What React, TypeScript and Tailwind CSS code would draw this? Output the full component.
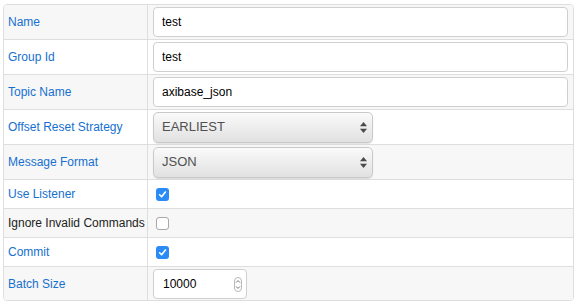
import React from 'react';

type Field =
  | { label: string; kind: 'text'; value: string; dark?: boolean }
  | { label: string; kind: 'select'; value: string; dark?: boolean }
  | { label: string; kind: 'check'; checked: boolean; dark?: boolean }
  | { label: string; kind: 'number'; value: string; dark?: boolean };

const fields: Field[] = [
  { label: 'Name', kind: 'text', value: 'test' },
  { label: 'Group Id', kind: 'text', value: 'test' },
  { label: 'Topic Name', kind: 'text', value: 'axibase_json' },
  { label: 'Offset Reset Strategy', kind: 'select', value: 'EARLIEST' },
  { label: 'Message Format', kind: 'select', value: 'JSON' },
  { label: 'Use Listener', kind: 'check', checked: true },
  { label: 'Ignore Invalid Commands', kind: 'check', checked: false, dark: true },
  { label: 'Commit', kind: 'check', checked: true },
  { label: 'Batch Size', kind: 'number', value: '10000' },
];

function Checkbox({ checked }: { checked: boolean }) {
  if (!checked) {
    return <span className="block w-[13px] h-[13px] rounded-[3px] border border-[#a8a8a8] bg-white" />;
  }
  return (
    <span className="flex items-center justify-center w-[13px] h-[13px] rounded-[3px] bg-[#2a8af6]">
      <svg width="9" height="9" viewBox="0 0 9 9" fill="none">
        <path d="M1.6 4.8 L3.6 6.8 L7.4 2" stroke="white" strokeWidth="1.6" strokeLinecap="round" strokeLinejoin="round" />
      </svg>
    </span>
  );
}

function Select({ value }: { value: string }) {
  return (
    <div className="relative w-[220px] h-[31px]">
      <select
        value={value}
        onChange={() => {}}
        className="appearance-none w-full h-full rounded-[5px] border border-[#c9c9c9] bg-gradient-to-b from-[#fafafa] to-[#e1e1e1] pl-[8px] text-[13px] text-[#505050] shadow-[0_1px_1px_rgba(0,0,0,0.12)] outline-none"
      >
        <option>{value}</option>
      </select>
      {/* arrows */}
      <svg className="absolute right-[6px] top-[10px] pointer-events-none" width="7" height="11" viewBox="0 0 7 11">
        <path d="M3.5 0 L7 4.2 L0 4.2 Z" fill="#4a4a4a" />
        <path d="M3.5 11 L7 6.8 L0 6.8 Z" fill="#4a4a4a" />
      </svg>
    </div>
  );
}

function NumberInput({ value }: { value: string }) {
  return (
    <div className="relative w-[94px] h-[30px]">
      <input
        readOnly
        value={value}
        className="w-full h-full rounded-[4px] border border-[#cfcfcf] bg-white pl-[9px] text-[12px] text-black outline-none"
      />
      <span className="absolute right-[5px] top-[8px] flex flex-col items-center justify-center w-[8px] h-[15px] rounded-[4px] border border-[#b8b8b8] pointer-events-none">
        <svg width="6" height="11" viewBox="0 0 6 11" fill="none">
          <path d="M1 3.6 L3 1.6 L5 3.6" stroke="#666" strokeWidth="0.9" />
          <path d="M1 7.4 L3 9.4 L5 7.4" stroke="#666" strokeWidth="0.9" />
        </svg>
      </span>
    </div>
  );
}

export default function App() {
  return (
    <div className="w-[577px] h-[306px] bg-white pt-[4px] pl-[3px]" style={{ fontFamily: '"Liberation Sans", Arial, sans-serif' }}>
      <div className="w-[571px] border border-[#dedede] rounded-[4px] overflow-hidden">
        {fields.map((f, i) => {
          const tall = f.kind !== 'check';
          const height = i === 0 ? 'h-[34px]' : f.kind === 'number' ? 'h-[34px]' : tall ? 'h-[35px]' : 'h-[29px]';
          return (
            <div
              key={f.label}
              className={`flex ${i > 0 ? 'border-t border-[#dedede]' : ''} ${i % 2 === 0 ? 'bg-[#f7f7f7]' : 'bg-white'} ${height}`}
            >
              <div
                className={`w-[144px] shrink-0 border-r border-[#dedede] flex items-center pl-[4px] text-[12px] ${
                  f.dark ? 'text-[#222]' : 'text-[#1570d0]'
                }`}
              >
                {f.label}
              </div>
              <div className="flex-1 flex items-center pl-[5px] pr-[5px]">
                {f.kind === 'text' && (
                  <input
                    readOnly
                    value={f.value}
                    className="w-full h-[30px] rounded-[4px] border border-[#cfcfcf] bg-white pl-[8px] text-[12px] text-black outline-none"
                  />
                )}
                {f.kind === 'select' && <Select value={f.value} />}
                {f.kind === 'check' && (
                  <div className="pl-[3px]">
                    <Checkbox checked={f.checked} />
                  </div>
                )}
                {f.kind === 'number' && <NumberInput value={f.value} />}
              </div>
            </div>
          );
        })}
      </div>
    </div>
  );
}
